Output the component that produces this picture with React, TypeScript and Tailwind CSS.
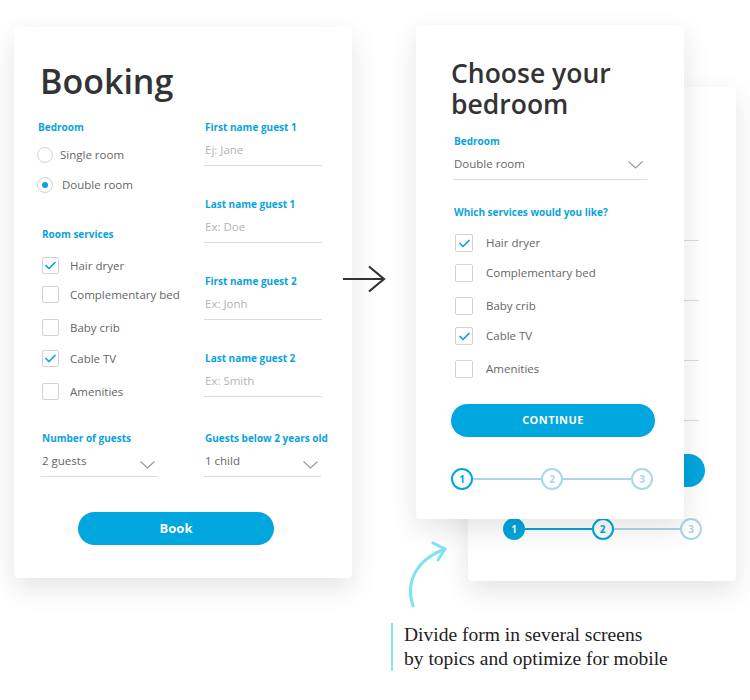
import React from 'react'

const checkLeft = [
  { label: 'Hair dryer', checked: true, mt: 'mt-[15px]' },
  { label: 'Complementary bed', checked: false, mt: 'mt-[12px]' },
  { label: 'Baby crib', checked: false, mt: 'mt-[16px]' },
  { label: 'Cable TV', checked: true, mt: 'mt-[14px]' },
  { label: 'Amenities', checked: false, mt: 'mt-[16px]' },
]

const checkRight = [
  { label: 'Hair dryer', checked: true, mt: 'mt-[14px]' },
  { label: 'Complementary bed', checked: false, mt: 'mt-[12px]' },
  { label: 'Baby crib', checked: false, mt: 'mt-[15px]' },
  { label: 'Cable TV', checked: true, mt: 'mt-[12px]' },
  { label: 'Amenities', checked: false, mt: 'mt-[15px]' },
]

const guestFields = [
  { label: 'First name guest 1', placeholder: 'Ej: Jane' },
  { label: 'Last name guest 1', placeholder: 'Ex: Doe' },
  { label: 'First name guest 2', placeholder: 'Ex: Jonh' },
  { label: 'Last name guest 2', placeholder: 'Ex: Smith' },
]

function Label({ children, className = '' }: { children: React.ReactNode; className?: string }) {
  return (
    <div className={`h-4 text-[10px] leading-4 font-bold text-[#0aa3dc] whitespace-nowrap ${className}`}>
      {children}
    </div>
  )
}

function Chevron({ className = '' }: { className?: string }) {
  return (
    <svg width="15" height="8" viewBox="0 0 15 8" className={className}>
      <polyline points="0.5,0.5 7.5,7 14.5,0.5" fill="none" stroke="#9a9a9a" strokeWidth="1.1" />
    </svg>
  )
}

function Box({ checked, size }: { checked: boolean; size: 'sm' | 'md' }) {
  return (
    <div
      className={`${size === 'sm' ? 'w-[17px] h-[17px]' : 'w-[18px] h-[18px]'} shrink-0 rounded-[2px] border border-[#d2d2d2] bg-white flex items-center justify-center`}
    >
      {checked && (
        <svg width="11" height="9" viewBox="0 0 11 9">
          <polyline points="1,4.5 4,7.5 10,1.5" fill="none" stroke="#0aa3dc" strokeWidth="1.7" strokeLinecap="round" strokeLinejoin="round" />
        </svg>
      )}
    </div>
  )
}

function Stepper({ step, className = 'w-[202px]' }: { step: 1 | 2; className?: string }) {
  return (
    <div className={`flex items-center ${className}`}>
      {step === 1 ? (
        <div className="w-[22px] h-[22px] shrink-0 rounded-full border-2 border-[#00a6de] bg-white flex items-center justify-center text-[10px] font-bold text-[#00a6de]">1</div>
      ) : (
        <div className="w-[22px] h-[22px] shrink-0 rounded-full border-2 border-[#00a6de] bg-[#00a6de] flex items-center justify-center text-[10px] font-bold text-white">1</div>
      )}
      <div className={step === 2 ? 'flex-1 h-[2px] bg-[#00a6de]' : 'flex-1 h-[2px] bg-[#a9d8e8]'} />
      {step === 2 ? (
        <div className="w-[22px] h-[22px] shrink-0 rounded-full border-2 border-[#00a6de] bg-white flex items-center justify-center text-[10px] font-bold text-[#00a6de]">2</div>
      ) : (
        <div className="w-[22px] h-[22px] shrink-0 rounded-full border-2 border-[#a9d8e8] bg-white flex items-center justify-center text-[10px] font-bold text-[#a9d8e8]">2</div>
      )}
      <div className="flex-1 h-[2px] bg-[#a9d8e8]" />
      <div className="w-[22px] h-[22px] shrink-0 rounded-full border-2 border-[#a9d8e8] bg-white flex items-center justify-center text-[10px] font-bold text-[#a9d8e8]">3</div>
    </div>
  )
}

function BookingCard() {
  return (
    <div className="ml-[14px] mt-[27px] w-[338px] h-[551px] shrink-0 rounded-[4px] bg-white shadow-[0_10px_28px_rgba(0,0,0,0.11)] pl-[24px] pt-[34px]">
      <h1 className="ml-[2px] text-[34px] leading-[40px] font-semibold text-[#333]">Booking</h1>

      <div className="mt-[18px] flex">
        {/* left column */}
        <div className="w-[166px]">
          <Label>Bedroom</Label>
          <div className="mt-[5px]">
            <div className="h-[30px] flex items-center -ml-[1px]">
              <div className="w-4 h-4 rounded-full border border-[#d2d2d2]" />
              <span className="ml-[7px] text-[11.5px] text-[#666]">Single room</span>
            </div>
            <div className="h-[30px] flex items-center -ml-[1px]">
              <div className="w-4 h-4 rounded-full border border-[#d2d2d2] flex items-center justify-center">
                <div className="w-[6px] h-[6px] rounded-full bg-[#0aa3dc]" />
              </div>
              <span className="ml-[9px] text-[11.5px] text-[#666]">Double room</span>
            </div>
          </div>

          <Label className="mt-[26px] ml-[4px]">Room services</Label>
          {checkLeft.map((c) => (
            <div key={c.label} className={`${c.mt} ml-[4px] h-[17px] flex items-center`}>
              <Box checked={c.checked} size="sm" />
              <span className="ml-[11px] text-[11.5px] text-[#666] whitespace-nowrap">{c.label}</span>
            </div>
          ))}
        </div>

        {/* right column */}
        <div className="flex flex-col gap-[30px]">
          {guestFields.map((f) => (
            <div key={f.label}>
              <Label className="ml-[1px]">{f.label}</Label>
              <div className="w-[118px] h-[31px] border-b border-[#dcdcdc] flex items-center pl-[1px] text-[11.5px] text-[#b3b3b3]">
                {f.placeholder}
              </div>
            </div>
          ))}
        </div>
      </div>

      <div className="mt-[30px] flex">
        <div className="w-[166px] pl-[3px]">
          <Label className="ml-[1px]">Number of guests</Label>
          <div className="w-[117px] h-[31px] border-b border-[#dcdcdc] flex items-center justify-between pl-[1px] pr-[3px]">
            <span className="text-[11.5px] text-[#666]">2 guests</span>
            <Chevron className="mt-[8px]" />
          </div>
        </div>
        <div>
          <Label className="ml-[1px]">Guests below 2 years old</Label>
          <div className="w-[117px] h-[31px] border-b border-[#dcdcdc] flex items-center justify-between pl-[1px] pr-[3px]">
            <span className="text-[11.5px] text-[#666]">1 child</span>
            <Chevron className="mt-[8px]" />
          </div>
        </div>
      </div>

      <button className="mt-[35px] ml-[40px] w-[196px] h-[33px] rounded-full bg-[#00a6de] text-white text-[13px] font-bold">
        Book
      </button>
    </div>
  )
}

function BedroomCard() {
  return (
    <div className="relative z-10 w-[268px] h-[494px] rounded-[4px] bg-white shadow-[0_10px_28px_rgba(0,0,0,0.11)] pl-[36px] pt-[33px]">
      <h2 className="-ml-[1px] text-[26.5px] leading-[31px] font-semibold text-[#333]">
        <div className="h-[31px]">Choose your</div>
        <div className="h-[31px]">bedroom</div>
      </h2>
      <Label className="mt-[13px] ml-[2px]">Bedroom</Label>
      <div className="ml-[1px] w-[194px] h-[31px] border-b border-[#dcdcdc] flex items-center justify-between pl-[1px] pr-[4px]">
        <span className="text-[11.5px] text-[#666]">Double room</span>
        <Chevron className="mt-[2px]" />
      </div>
      <Label className="mt-[24px] ml-[2px]">Which services would you like?</Label>
      {checkRight.map((c) => (
        <div key={c.label} className={`${c.mt} ml-[3px] h-[18px] flex items-center`}>
          <Box checked={c.checked} size="md" />
          <span className="ml-[13px] text-[11.5px] text-[#666] whitespace-nowrap">{c.label}</span>
        </div>
      ))}
      <button className="mt-[26px] -ml-[1px] w-[204px] h-[33px] rounded-full bg-[#00a6de] text-white text-[11px] font-bold tracking-[0.04em]">
        CONTINUE
      </button>
      <div className="mt-[31px] -ml-[1px]">
        <Stepper step={1} />
      </div>
    </div>
  )
}

function GuestsCard() {
  // second screen of the flow, mostly hidden behind the first one:
  // only the input underlines, the button end and the stepper show
  return (
    <div className="absolute left-[52px] top-[62px] z-0 w-[268px] h-[494px] rounded-[4px] bg-white shadow-[0_10px_28px_rgba(0,0,0,0.11)] pl-[36px] pt-[33px]">
      <div className="h-[62px]" />
      <div className="mt-[13px] ml-[1px] flex flex-col gap-[14px]">
        {guestFields.map((f) => (
          <div key={f.label}>
            <div className="h-4" />
            <div className="w-[194px] h-[30px] border-b border-[#dcdcdc]" />
          </div>
        ))}
      </div>
      <div className="mt-[33px] -ml-[1px] w-[202px] h-[33px] rounded-full bg-[#00a6de]" />
      <div className="mt-[31px] -ml-[1px]">
        <Stepper step={2} className="w-[199px]" />
      </div>
    </div>
  )
}

export default function App() {
  return (
    <div className="relative w-[750px] h-[700px] overflow-hidden bg-white flex font-['Open_Sans',sans-serif]">
      <BookingCard />

      {/* arrow between the two versions */}
      <svg width="50" height="30" viewBox="0 0 50 30" className="absolute left-[340px] top-[265px]">
        <line x1="3" y1="14" x2="44" y2="14" stroke="#333" strokeWidth="2.2" />
        <polyline points="29,1.5 44,14 29,26.5" fill="none" stroke="#333" strokeWidth="2.2" />
      </svg>

      <div className="relative ml-[64px] mt-[25px] flex flex-col">
        <div className="relative">
          <GuestsCard />
          <BedroomCard />
        </div>

        <svg width="56" height="72" viewBox="0 0 56 72" className="absolute -left-[16px] top-[515px]">
          <path d="M13,66 C5,42 16,20 45,9" fill="none" stroke="#80e3f1" strokeWidth="3" strokeLinecap="round" />
          <polyline points="33,3 45,9 38,20" fill="none" stroke="#80e3f1" strokeWidth="3" strokeLinecap="round" strokeLinejoin="round" />
        </svg>

        <div className="mt-[104px] -ml-[25px] border-l-2 border-[#8ee6f2] pl-[11px] font-['Liberation_Serif',serif] text-[19.5px] leading-[24px] text-[#222] whitespace-nowrap">
          Divide form in several screens
          <br />
          by topics and optimize for mobile
        </div>
      </div>
    </div>
  )
}
